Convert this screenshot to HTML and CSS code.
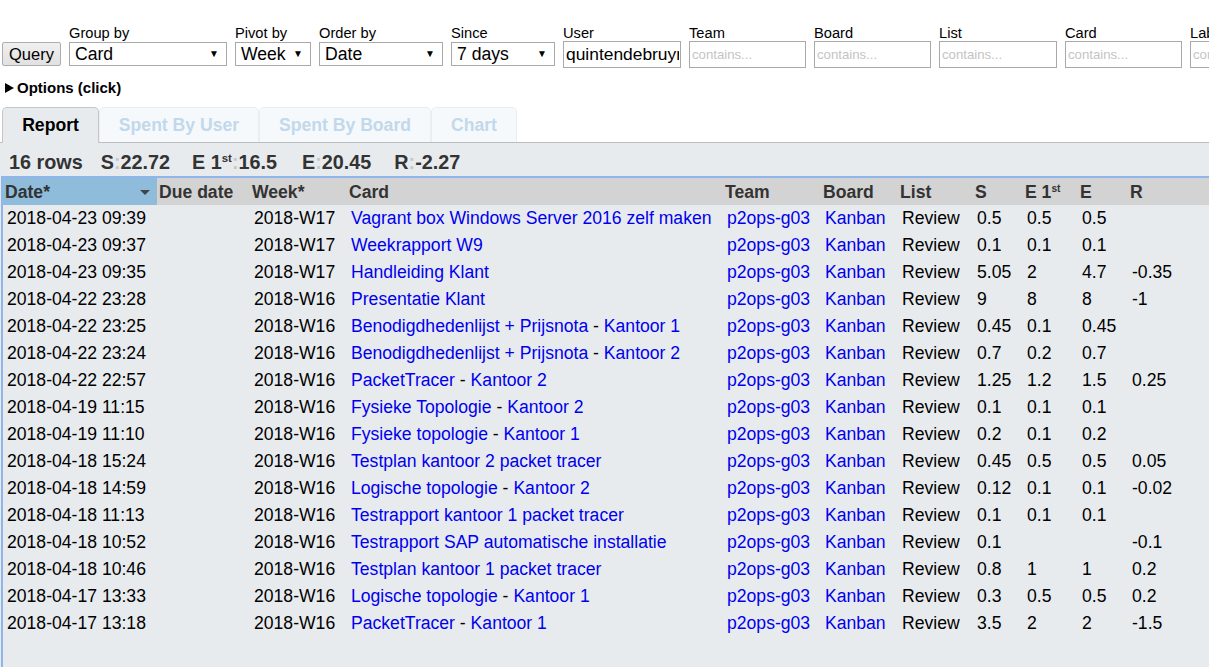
FILE: index.html
```html
<!DOCTYPE html>
<html>
<head>
<meta charset="utf-8">
<title>Report</title>
<link rel="stylesheet" href="styles.css">
</head>
<body>
<div class="filters">
  <button class="query">Query</button>
  <div class="field w-group"><label>Group by</label><div class="select">Card<span class="arrow">▼</span></div></div>
  <div class="field w-pivot"><label>Pivot by</label><div class="select">Week<span class="arrow">▼</span></div></div>
  <div class="field w-order"><label>Order by</label><div class="select">Date<span class="arrow">▼</span></div></div>
  <div class="field w-since"><label>Since</label><div class="select">7 days<span class="arrow">▼</span></div></div>
  <div class="field w-user"><label>User</label><input class="text user" type="text" value="quintendebruyne"></div>
  <div class="field w-117"><label>Team</label><input class="text" type="text" placeholder="contains..."></div>
  <div class="field w-117"><label>Board</label><input class="text" type="text" placeholder="contains..."></div>
  <div class="field w-118"><label>List</label><input class="text" type="text" placeholder="contains..."></div>
  <div class="field w-117"><label>Card</label><input class="text" type="text" placeholder="contains..."></div>
  <div class="field w-117"><label>Label</label><input class="text" type="text" placeholder="contains..."></div>
</div>
<div class="options"><span class="tri"></span>Options (click)</div>
<div class="tabs">
  <div class="tab active t-report">Report</div>
  <div class="tab t-user">Spent By User</div>
  <div class="tab t-board">Spent By Board</div>
  <div class="tab t-chart">Chart</div>
</div>
<div class="panel">
  <div class="stats">
    <span class="stat first">16 rows</span>
    <span class="stat">S<span class="colon">:</span>22.72</span>
    <span class="stat third">E 1<sup>st</sup><span class="colon">:</span>16.5</span>
    <span class="stat fourth">E<span class="colon">:</span>20.45</span>
    <span class="stat">R<span class="colon">:</span>-2.27</span>
  </div>
  <div class="grid-wrap">
    <table class="grid">
      <colgroup>
        <col class="c-date"><col class="c-due"><col class="c-week"><col class="c-card"><col class="c-team"><col class="c-board"><col class="c-list"><col class="c-s"><col class="c-e1"><col class="c-e"><col class="c-r">
      </colgroup>
      <thead>
        <tr>
          <th class="sorted">Date*<span class="sort"></span></th>
          <th>Due date</th><th>Week*</th><th>Card</th><th>Team</th><th>Board</th><th>List</th><th>S</th><th>E 1<sup>st</sup></th><th>E</th><th>R</th>
        </tr>
      </thead>
      <tbody>
        <tr><td>2018-04-23 09:39</td><td></td><td>2018-W17</td><td><a href="#">Vagrant box Windows Server 2016 zelf maken</a></td><td><a href="#">p2ops-g03</a></td><td><a href="#">Kanban</a></td><td>Review</td><td>0.5</td><td>0.5</td><td>0.5</td><td></td></tr>
        <tr><td>2018-04-23 09:37</td><td></td><td>2018-W17</td><td><a href="#">Weekrapport W9</a></td><td><a href="#">p2ops-g03</a></td><td><a href="#">Kanban</a></td><td>Review</td><td>0.1</td><td>0.1</td><td>0.1</td><td></td></tr>
        <tr><td>2018-04-23 09:35</td><td></td><td>2018-W17</td><td><a href="#">Handleiding Klant</a></td><td><a href="#">p2ops-g03</a></td><td><a href="#">Kanban</a></td><td>Review</td><td>5.05</td><td>2</td><td>4.7</td><td>-0.35</td></tr>
        <tr><td>2018-04-22 23:28</td><td></td><td>2018-W16</td><td><a href="#">Presentatie Klant</a></td><td><a href="#">p2ops-g03</a></td><td><a href="#">Kanban</a></td><td>Review</td><td>9</td><td>8</td><td>8</td><td>-1</td></tr>
        <tr><td>2018-04-22 23:25</td><td></td><td>2018-W16</td><td><a href="#">Benodigdhedenlijst + Prijsnota</a> - <a href="#">Kantoor 1</a></td><td><a href="#">p2ops-g03</a></td><td><a href="#">Kanban</a></td><td>Review</td><td>0.45</td><td>0.1</td><td>0.45</td><td></td></tr>
        <tr><td>2018-04-22 23:24</td><td></td><td>2018-W16</td><td><a href="#">Benodigdhedenlijst + Prijsnota</a> - <a href="#">Kantoor 2</a></td><td><a href="#">p2ops-g03</a></td><td><a href="#">Kanban</a></td><td>Review</td><td>0.7</td><td>0.2</td><td>0.7</td><td></td></tr>
        <tr><td>2018-04-22 22:57</td><td></td><td>2018-W16</td><td><a href="#">PacketTracer</a> - <a href="#">Kantoor 2</a></td><td><a href="#">p2ops-g03</a></td><td><a href="#">Kanban</a></td><td>Review</td><td>1.25</td><td>1.2</td><td>1.5</td><td>0.25</td></tr>
        <tr><td>2018-04-19 11:15</td><td></td><td>2018-W16</td><td><a href="#">Fysieke Topologie</a> - <a href="#">Kantoor 2</a></td><td><a href="#">p2ops-g03</a></td><td><a href="#">Kanban</a></td><td>Review</td><td>0.1</td><td>0.1</td><td>0.1</td><td></td></tr>
        <tr><td>2018-04-19 11:10</td><td></td><td>2018-W16</td><td><a href="#">Fysieke topologie</a> - <a href="#">Kantoor 1</a></td><td><a href="#">p2ops-g03</a></td><td><a href="#">Kanban</a></td><td>Review</td><td>0.2</td><td>0.1</td><td>0.2</td><td></td></tr>
        <tr><td>2018-04-18 15:24</td><td></td><td>2018-W16</td><td><a href="#">Testplan kantoor 2 packet tracer</a></td><td><a href="#">p2ops-g03</a></td><td><a href="#">Kanban</a></td><td>Review</td><td>0.45</td><td>0.5</td><td>0.5</td><td>0.05</td></tr>
        <tr><td>2018-04-18 14:59</td><td></td><td>2018-W16</td><td><a href="#">Logische topologie</a> - <a href="#">Kantoor 2</a></td><td><a href="#">p2ops-g03</a></td><td><a href="#">Kanban</a></td><td>Review</td><td>0.12</td><td>0.1</td><td>0.1</td><td>-0.02</td></tr>
        <tr><td>2018-04-18 11:13</td><td></td><td>2018-W16</td><td><a href="#">Testrapport kantoor 1 packet tracer</a></td><td><a href="#">p2ops-g03</a></td><td><a href="#">Kanban</a></td><td>Review</td><td>0.1</td><td>0.1</td><td>0.1</td><td></td></tr>
        <tr><td>2018-04-18 10:52</td><td></td><td>2018-W16</td><td><a href="#">Testrapport SAP automatische installatie</a></td><td><a href="#">p2ops-g03</a></td><td><a href="#">Kanban</a></td><td>Review</td><td>0.1</td><td></td><td></td><td>-0.1</td></tr>
        <tr><td>2018-04-18 10:46</td><td></td><td>2018-W16</td><td><a href="#">Testplan kantoor 1 packet tracer</a></td><td><a href="#">p2ops-g03</a></td><td><a href="#">Kanban</a></td><td>Review</td><td>0.8</td><td>1</td><td>1</td><td>0.2</td></tr>
        <tr><td>2018-04-17 13:33</td><td></td><td>2018-W16</td><td><a href="#">Logische topologie</a> - <a href="#">Kantoor 1</a></td><td><a href="#">p2ops-g03</a></td><td><a href="#">Kanban</a></td><td>Review</td><td>0.3</td><td>0.5</td><td>0.5</td><td>0.2</td></tr>
        <tr><td>2018-04-17 13:18</td><td></td><td>2018-W16</td><td><a href="#">PacketTracer</a> - <a href="#">Kantoor 1</a></td><td><a href="#">p2ops-g03</a></td><td><a href="#">Kanban</a></td><td>Review</td><td>3.5</td><td>2</td><td>2</td><td>-1.5</td></tr>
      </tbody>
    </table>
  </div>
</div>
</body>
</html>
```
FILE: styles.css
```css
html, body {
  margin: 0;
  padding: 0;
}
body {
  font-family: "Liberation Sans", Arial, sans-serif;
  color: #000;
  background: #fff;
  height: 667px;
  overflow: hidden;
  display: flex;
  flex-direction: column;
}
.filters {
  display: flex;
  align-items: flex-start;
  gap: 8px;
  padding: 25px 0 0 2px;
  white-space: nowrap;
}
.filters > * {
  flex-shrink: 0;
}
.query {
  margin-top: 17px;
  width: 59px;
  height: 24px;
  padding: 0;
  font-family: "Liberation Sans", Arial, sans-serif;
  font-size: 16.5px;
  color: #000;
  background: linear-gradient(#f0f0f0, #e1e1e1);
  border: 1px solid #adadad;
  border-radius: 2px;
}
.field {
  display: flex;
  flex-direction: column;
}
.field label {
  display: block;
  height: 16px;
  line-height: 16px;
  font-size: 14.67px;
  color: #000;
}
.w-group { width: 158px; }
.w-pivot { width: 76px; }
.w-order { width: 124px; }
.w-since { width: 104px; }
.w-user { width: 118px; }
.w-117 { width: 117px; }
.w-118 { width: 118px; }
.select {
  margin-top: 1px;
  box-sizing: border-box;
  height: 24px;
  line-height: 22px;
  border: 1px solid #a9a9a9;
  background: #fff;
  padding-left: 5px;
  font-size: 17.6px;
  position: relative;
}
.select .arrow {
  position: absolute;
  right: 7px;
  top: 0;
  font-size: 10px;
  line-height: 22px;
  color: #000;
}
.text {
  box-sizing: border-box;
  width: 100%;
  height: 27px;
  margin: 0;
  border: 1px solid #a9a9a9;
  padding: 0 1px 0 2px;
  font-family: "Liberation Sans", Arial, sans-serif;
  font-size: 13.2px;
  outline: none;
  background: #fff;
}
.text.user {
  font-size: 17.4px;
}
.text::placeholder {
  color: #c4c4c4;
}
.options {
  margin-top: 11px;
  padding-left: 5px;
  height: 17px;
  line-height: 17px;
  font-size: 15px;
  font-weight: bold;
  display: flex;
  align-items: center;
}
.tri {
  display: inline-block;
  width: 0;
  height: 0;
  border-left: 9px solid #000;
  border-top: 5px solid transparent;
  border-bottom: 5px solid transparent;
  margin-right: 3px;
}
.tabs {
  margin-top: 11px;
  display: flex;
  padding-left: 2px;
  height: 35px;
  border-bottom: 1px solid #bdbdbd;
  flex-shrink: 0;
}
.tab {
  box-sizing: border-box;
  height: 35px;
  line-height: 35px;
  text-align: center;
  font-size: 17.6px;
  font-weight: bold;
  border: 1px solid #e8eef4;
  border-bottom: none;
  border-radius: 5px 5px 0 0;
  background: #f6f9fc;
  color: #c2d8eb;
}
.tab.active {
  height: 36px;
  background: #e8ebee;
  border-color: #c6c6c6;
  color: #000;
}
.t-report { width: 97px; }
.t-user { width: 160px; }
.t-board { width: 172px; }
.t-chart { width: 86px; }
.panel {
  flex: 1;
  background: #e8ebee;
  display: flex;
  flex-direction: column;
  padding-top: 8px;
}
.stats {
  height: 23px;
  line-height: 23px;
  padding-left: 9px;
  font-size: 19.8px;
  font-weight: bold;
  color: #333;
  display: flex;
  gap: 22px;
  white-space: nowrap;
}
.stats .first {
  margin-right: -4px;
}
.stats .third {
  margin-right: 3px;
}
.stats .fourth {
  margin-right: 1px;
}
.stats sup, th sup {
  font-size: 58%;
  vertical-align: top;
  line-height: 1;
  position: relative;
  top: 2px;
}
.colon {
  color: #c8c8c8;
}
.grid-wrap {
  flex: 1;
  margin-top: 2px;
  margin-left: 1px;
  border-top: 2px solid #8fb5ea;
  border-left: 2px solid #8fb5ea;
}
.grid {
  border-collapse: collapse;
  table-layout: fixed;
  width: 1206px;
  font-size: 17.6px;
}
.c-date { width: 154px; }
.c-due { width: 93px; }
.c-week { width: 97px; }
.c-card { width: 376px; }
.c-team { width: 98px; }
.c-board { width: 77px; }
.c-list { width: 75px; }
.c-s { width: 50px; }
.c-e1 { width: 55px; }
.c-e { width: 50px; }
.c-r { width: 81px; }
.grid th {
  height: 25px;
  padding: 2px 0 0 2px;
  text-align: left;
  font-weight: bold;
  color: #333;
  background: #d3d3d3;
  white-space: nowrap;
  overflow: hidden;
}
.grid th.sorted {
  background: #8fbcdb;
  position: relative;
}
.sort {
  position: absolute;
  right: 7px;
  top: 12px;
  width: 0;
  height: 0;
  border-top: 5px solid #444;
  border-left: 5px solid transparent;
  border-right: 5px solid transparent;
}
.grid td {
  height: 27px;
  padding: 0 0 0 4px;
  white-space: nowrap;
  overflow: hidden;
}
.grid a {
  color: #0000ee;
  text-decoration: none;
}
```
